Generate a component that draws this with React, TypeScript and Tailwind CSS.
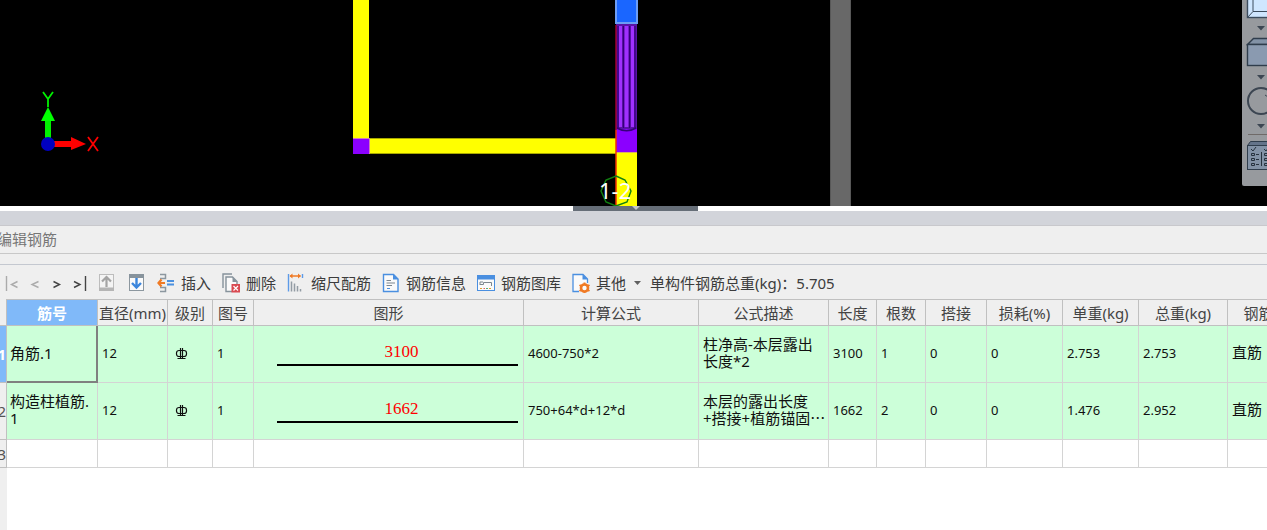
import type { ReactNode } from "react";

function Viewport() {
  return (
    <svg className="block h-[206px] w-[1267px]" viewBox="0 0 1267 206" aria-label="Model view">
      <rect x="353" y="0" width="16" height="138" fill="#ffff00" />
      <rect x="369" y="138" width="247" height="16" fill="#ffff00" />
      <path d="M369 138.5H616M369 153.5H616" stroke="#a8a800" />
      <rect x="353" y="138" width="16" height="16" fill="#8b00ff" />
      <path d="M353 138.5H369.5V154" stroke="#d080b0" fill="none" />

      <rect x="830" y="0" width="21" height="206" fill="#686868" />
      <path d="M830.5 0V206M850.5 0V206" stroke="#585858" />

      <rect x="616" y="24" width="21" height="107" fill="#5a12a8" />
      <rect x="616" y="129" width="21" height="23" fill="#8b00ff" />
      <path d="M617 127Q626.500 133 636 127V129Q626.500 134 617 129Z" fill="#35007a" />
      <path d="M620.500 26V127M632.500 26V127" stroke="#a030ff" strokeWidth="3" />
      <path d="M626.500 26V127" stroke="#a030ff" strokeWidth="4" />
      <path d="M618 26V128M623.500 26V128M629.500 26V128M635 26V128" stroke="#35007a" strokeWidth="1.200" />
      <rect x="616" y="152" width="21" height="54" fill="#ffff00" />
      <path d="M616 152.500H637" stroke="#d8b060" />
      <path d="M616 25V130" stroke="#a00030" strokeWidth="1.500" />
      <path d="M616 130V206" stroke="#f03000" strokeWidth="1.500" />
      <rect x="615" y="-2" width="23" height="26" fill="#6c9df5" />
      <rect x="617" y="-2" width="19" height="24" fill="#1a66ff" />

      <polygon
        points="616,176 625,180 631,191 627,202 616,206 606,202 601,191 606,180"
        fill="none"
        stroke="#108010"
        strokeWidth="1.400"
      />
      <text x="599" y="199" fontSize="22" fill="#ffffff" fontFamily="'Noto Sans', sans-serif">
        1-2
      </text>

      <rect x="45" y="120" width="6" height="20" fill="#00f000" />
      <path d="M48 107L55 121H41Z" fill="#00ff00" />
      <rect x="54" y="141" width="18" height="6" fill="#ff0000" />
      <path d="M71 137L86 144L71 150Z" fill="#ff0000" />
      <circle cx="48" cy="144" r="7" fill="#0000c0" />
      <path d="M43 92L48 99L53 92M48 99V107" stroke="#00f000" strokeWidth="1.800" fill="none" />
      <path d="M88 137L98 151M98 137L88 151" stroke="#ff0000" strokeWidth="1.800" fill="none" />
    </svg>
  );
}

function Caret() {
  return (
    <svg className="ml-3.5 h-1.5 w-2.5 shrink-0" viewBox="0 0 10 6" aria-hidden="true">
      <path d="M1 1H9L5 5.500Z" fill="#3c4652" />
    </svg>
  );
}

function SideTools() {
  return (
    <aside className="absolute top-0 right-0 flex h-[186px] w-[25px] flex-col overflow-hidden rounded-bl-xs bg-[#979a9e]">
      <button type="button" aria-label="View" className="flex h-[37px] flex-col">
        <svg className="h-[25px] w-[25px]" viewBox="0 0 25 25">
          <rect x="5.500" y="-8" width="30" height="25.500" fill="#cfe6ff" stroke="#3c4c5e" strokeWidth="1.400" />
          <path d="M11 -2V11.500H26M5.500 17.500L11 11.500" stroke="#3c4c5e" fill="none" />
        </svg>
        <Caret />
      </button>
      <button type="button" aria-label="Solid" className="flex h-[49px] flex-col gap-1">
        <svg className="h-[33px] w-[25px]" viewBox="0 0 25 33">
          <path d="M5.500 7.500L11.500 1.500H30V7.500Z" fill="#8292a6" stroke="#2f3d4c" strokeWidth="1.400" />
          <rect x="5.500" y="7.500" width="25" height="21" fill="#8a9ab0" stroke="#2f3d4c" strokeWidth="1.400" />
        </svg>
        <Caret />
      </button>
      <button type="button" aria-label="Rotate" className="flex h-12 flex-col gap-1">
        <svg className="h-[33px] w-[25px]" viewBox="0 0 25 33">
          <circle cx="19" cy="15" r="13" stroke="#3c4652" strokeWidth="2" fill="none" />
          <path d="M23 9L26 11" stroke="#3c4652" />
        </svg>
        <Caret />
      </button>
      <hr className="ml-1.5 border-0 border-t border-[#6f6a68]" />
      <button type="button" aria-label="Display options" className="pt-1.5">
        <svg className="h-[30px] w-[25px]" viewBox="0 0 25 30">
          <path d="M5.500 4.500L8.500 .5H28V4.500Z" fill="#64748a" stroke="#2f3d4c" />
          <rect x="5.500" y="4.500" width="25" height="24" fill="#8292a6" stroke="#2f3d4c" />
          <path d="M9 8L11 10L14 6M22 8L24 10L27 6M19.500 11V25" stroke="#26323e" fill="none" />
          <path d="M9.500 12.500h3v2h-3zM9.500 17.500h3v2h-3zM9.500 22.500h3v2h-3zM22.500 12.500h3v2h-3zM22.500 17.500h3v2h-3zM22.500 22.500h3v2h-3zM14 13.500H17M14 18.500H17M14 23.500H17" stroke="#26323e" fill="none" />
        </svg>
      </button>
    </aside>
  );
}

function Icon({ children }: { children: ReactNode }) {
  return (
    <svg className="h-5 w-[18px] shrink-0" viewBox="0 0 18 20" fill="none" aria-hidden="true">
      {children}
    </svg>
  );
}

function ArrowBox({ up = false }: { up?: boolean }) {
  return up ? (
    <Icon>
      <rect x="1.500" y="1.500" width="14" height="16" fill="#f4f4f4" stroke="#bdbdbd" />
      <path d="M1 14.500H16V18H1Z" fill="#b5b5b5" />
      <path d="M8.500 14V5M4 8.500L8.500 4L13 8.500" stroke="#a4a4a4" strokeWidth="2.200" />
    </Icon>
  ) : (
    <Icon>
      <rect x="1.500" y="1.500" width="14" height="16" fill="#fafafa" stroke="#8c979f" />
      <path d="M1 1H16V5H1Z" fill="#87939c" />
      <path d="M8.500 5V14M4 10L8.500 14.500L13 10" stroke="#3c86dc" strokeWidth="2.400" />
    </Icon>
  );
}

const insertIcon = (
  <Icon>
    <path d="M3 1.500H8.500V5.500H3M3 14.500H8.500V18.500H3" stroke="#8c979f" strokeWidth="1.500" />
    <path d="M1 10H8M4.500 6.500L1.500 10L4.500 13.500" stroke="#f07a24" strokeWidth="2.200" />
    <path d="M10 8H17M10 11.500H17" stroke="#4a90e0" strokeWidth="2" />
  </Icon>
);
const deleteIcon = (
  <Icon>
    <path d="M1 15V1H10" stroke="#87939c" strokeWidth="1.400" />
    <path d="M10 18.500H4V4H10.500L15 8.500V11" stroke="#87939c" strokeWidth="1.400" fill="#fafafa" />
    <path d="M10.500 4V9H15.500Z" fill="#87939c" />
    <rect x="9.500" y="11" width="8.500" height="8.500" fill="#d94a52" />
    <path d="M11.500 13L16 17.500M16 13L11.500 17.500" stroke="#ffffff" strokeWidth="1.200" />
  </Icon>
);
const scaleIcon = (
  <Icon>
    <path d="M1.500 1V18.500" stroke="#5d9be8" strokeWidth="1.400" />
    <path d="M15.500 1V5" stroke="#5d9be8" strokeWidth="1.400" />
    <path d="M3 3H13.500" stroke="#f07a24" strokeWidth="1.500" />
    <path d="M11 .5L14 3L11 5.500ZM5.500 .5L2.500 3L5.500 5.500Z" fill="#f07a24" />
    <path d="M4.500 8.500V18.500M7.500 10.500V18.500M10.500 13V18.500M13.500 16V18.500" stroke="#939ca4" strokeWidth="1.500" />
  </Icon>
);
const infoIcon = (
  <Icon>
    <path d="M1.500 1.500H11.500L16 6V18.500H1.500Z" fill="#fafafa" stroke="#4a8fe0" strokeWidth="1.400" />
    <path d="M11 1V6.500H16.500Z" fill="#4a8fe0" />
    <path d="M4.500 7.500H9M4.500 10H13M4.500 12.500H10" stroke="#7d868e" />
    <path d="M5 15.500H8" stroke="#4a8fe0" />
  </Icon>
);
const libraryIcon = (
  <Icon>
    <rect x=".5" y="2.500" width="17" height="15" fill="#fafafa" stroke="#4a8fe0" />
    <path d="M0 2H18V6.500H0Z" fill="#4a8fe0" />
    <path d="M3 12V9H6M3 11.500H6.500V9.500H14.500V13" stroke="#7d868e" />
    <path d="M3 15.500H5M12 15.500H14" stroke="#e0a030" />
    <path d="M6.500 15.500H8" stroke="#e06060" />
    <path d="M9 15.500H11" stroke="#50b080" />
  </Icon>
);
const otherIcon = (
  <Icon>
    <path d="M7 18.500H1V1.500H11L15.500 6V10" stroke="#4a8fe0" strokeWidth="1.300" fill="#fafafa" />
    <path d="M10.500 1V6.500H16Z" fill="#4a8fe0" />
    <circle cx="12.500" cy="15" r="3.500" stroke="#f07a24" strokeWidth="2.600" fill="#fafafa" />
    <path d="M12.500 9.500V12M12.500 18V20M7.500 12L10 13.500M17.500 12L15 13.500M7.500 18L10 16.500M17.500 18L15 16.500" stroke="#f07a24" strokeWidth="2" />
  </Icon>
);

const actions = [
  { label: "插入", icon: insertIcon },
  { label: "删除", icon: deleteIcon },
  { label: "缩尺配筋", icon: scaleIcon },
  { label: "钢筋信息", icon: infoIcon },
  { label: "钢筋图库", icon: libraryIcon },
  { label: "其他", icon: otherIcon },
];

function NavIcon({ d, dim = false }: { d: string; dim?: boolean }) {
  return (
    <svg className="h-4 w-3.5" viewBox="0 0 14 16" fill="none" aria-hidden="true">
      <path d={d} stroke={dim ? "#ababab" : "#444444"} strokeWidth="1.400" />
    </svg>
  );
}

function Toolbar() {
  return (
    <div className="flex h-[34px] items-center pt-0.5 pl-[5px] whitespace-nowrap">
      <div className="flex w-[93px] shrink-0 gap-2.5">
        <button type="button" aria-label="First"><NavIcon dim d="M1.500 1V16M12.500 6.500L6.500 9.500L12.500 12.500" /></button>
        <button type="button" aria-label="Previous"><NavIcon dim d="M9.500 6.500L3 9.500L9.500 12.500" /></button>
        <button type="button" aria-label="Next"><NavIcon d="M.5 6.500L6.500 9.500L.5 12.500" /></button>
        <button type="button" aria-label="Last" className="-ml-1"><NavIcon d="M1 6.500L7 9.500L1 12.500M12.500 1V16" /></button>
      </div>
      <button type="button" aria-label="Move up" className="mr-3"><ArrowBox up /></button>
      <button type="button" aria-label="Move down" className="mr-[11px]"><ArrowBox /></button>
      <div className="flex items-center gap-[11px]">
        {actions.map((a) => (
          <button type="button" key={a.label} className="flex items-center gap-1.5">
            {a.icon}
            <span>{a.label}</span>
          </button>
        ))}
      </div>
      <svg className="mx-[7px] h-1.5 w-2.5" viewBox="0 0 10 6" aria-hidden="true">
        <path d="M1 1H8L4.500 5Z" fill="#606060" />
      </svg>
      <span>单构件钢筋总重(kg)：5.705</span>
    </div>
  );
}

const columns = [
  { title: "筋号", width: "w-[91px]" },
  { title: "直径(mm)", width: "w-[70px]" },
  { title: "级别", width: "w-[45px]" },
  { title: "图号", width: "w-[41px]" },
  { title: "图形", width: "w-[270px]" },
  { title: "计算公式", width: "w-[175px]" },
  { title: "公式描述", width: "w-[130px]" },
  { title: "长度", width: "w-[48px]" },
  { title: "根数", width: "w-[49px]" },
  { title: "搭接", width: "w-[61px]" },
  { title: "损耗(%)", width: "w-[76px]" },
  { title: "单重(kg)", width: "w-[76px]" },
  { title: "总重(kg)", width: "w-[89px]" },
  { title: "钢筋归类", width: "w-[92px]" },
];

const rows = [
  {
    name: "角筋.1", diameter: "12", shape: "1", length: "3100", formula: "4600-750*2",
    note: "柱净高-本层露出\n长度*2", values: ["3100", "1", "0", "0", "2.753", "2.753"], kind: "直筋",
  },
  {
    name: "构造柱植筋.1", diameter: "12", shape: "1", length: "1662", formula: "750+64*d+12*d",
    note: "本层的露出长度\n+搭接+植筋锚固⋯", values: ["1662", "2", "0", "0", "1.476", "2.952"], kind: "直筋",
  },
];

function GradeSymbol() {
  return (
    <svg className="mt-0.5 ml-[3px] h-3.5 w-3.5" viewBox="0 0 14 14" fill="none" role="img" aria-label="HRB400">
      <rect x="1.500" y="3.500" width="10" height="6" rx="2.500" stroke="#101010" strokeWidth="1.200" />
      <path d="M5.500 1V12M7.500 1V12M2.500 11.500H10.500" stroke="#101010" strokeWidth="1.200" />
    </svg>
  );
}

function Cell({ children, wide = false }: { children?: ReactNode; wide?: boolean }) {
  return (
    <td className={`overflow-hidden border-r border-b border-[#d4d4d4] px-1 pb-[3px] ${wide ? "text-[15px] leading-[17px]" : "text-[13px] leading-4"}`}>
      {children}
    </td>
  );
}

function RebarTable() {
  return (
    <div className="overflow-hidden">
      <table className="w-full min-w-[1320px] table-fixed border-separate border-spacing-0 text-[#101010]">
        <thead>
          <tr className="h-[27px] text-[15px] leading-5 text-[#444444]">
            <th className="w-[7px] border-r border-b border-[#bfbfbf] bg-[#efefef] p-0" />
            {columns.map((c, i) => (
              <th
                key={c.title}
                scope="col"
                className={`${c.width} border-t border-r border-b border-[#c0c0c0] p-0 text-center whitespace-nowrap ${
                  i === 0 ? "bg-[#80b9f9] font-bold text-white" : "bg-[#efefef] font-normal"
                }`}
              >
                {c.title}
              </th>
            ))}
          </tr>
        </thead>
        <tbody>
          {rows.map((r, i) => (
            <tr key={r.name} className="h-[57px] bg-[#ccffd9]">
              <th
                scope="row"
                className={`overflow-hidden border-r border-b border-[#c0c0c0] p-0 text-[15px] ${
                  i === 0 ? "bg-[#80b9f9] font-bold text-white" : "bg-[#efefef] font-normal text-[#555555]"
                }`}
              >
                <span className="flex justify-end">{i + 1}</span>
              </th>
              <td
                className={`px-[3px] text-[15px] leading-[17px] break-all ${
                  i === 0 ? "border-r-2 border-b-2 border-[#808080]" : "border-r border-b border-[#d4d4d4] pb-[3px]"
                }`}
              >
                {r.name}
              </td>
              <Cell>{r.diameter}</Cell>
              <Cell><GradeSymbol /></Cell>
              <Cell>{r.shape}</Cell>
              <td className="border-r border-b border-[#d4d4d4] px-[5px] pb-1">
                <div className="ml-[18px] border-b-2 border-black pt-0.5 pr-0 pl-2 text-center font-['Liberation_Serif',serif] text-[17px] leading-6 text-[#ff0000]">
                  {r.length}
                </div>
              </td>
              <Cell>{r.formula}</Cell>
              <Cell wide><span className="whitespace-pre">{r.note}</span></Cell>
              {r.values.map((v, j) => (
                <Cell key={j}>{v}</Cell>
              ))}
              <Cell wide>{r.kind}</Cell>
            </tr>
          ))}
          <tr className="h-7 bg-white">
            <th scope="row" className="overflow-hidden border-r border-b border-[#c0c0c0] bg-[#efefef] p-0 text-[15px] font-normal text-[#555555]">
              <span className="flex justify-end">3</span>
            </th>
            {columns.map((c) => (
              <Cell key={c.title} />
            ))}
          </tr>
        </tbody>
      </table>
    </div>
  );
}

export default function App() {
  return (
    <main className="flex min-h-screen flex-col overflow-hidden bg-white font-['Noto_Sans','Noto_Sans_CJK_SC',sans-serif] text-[15px] leading-5 text-[#3c3c3c]">
      <section className="relative overflow-hidden bg-black">
        <Viewport />
        <SideTools />
      </section>
      <div className="flex h-[5px] justify-center bg-white pl-1">
        <button type="button" aria-label="Collapse panel" className="flex w-[125px] justify-center bg-[#666e78]">
          <svg className="h-1 w-2" viewBox="0 0 8 4" aria-hidden="true">
            <path d="M0 0H8L4 4Z" fill="#c4c8cc" />
          </svg>
        </button>
      </div>
      <div className="h-[15px] border-b border-[#c8c8cc] bg-[#d2d4da]" />
      <section className="bg-[#efefef]">
        <h2 className="-ml-[3px] flex h-7 items-center border-b border-[#c8c8c8] pb-0.5 text-[#777777]">编辑钢筋</h2>
        <div className="h-[11px] border-b border-[#c4c8d0]" />
        <Toolbar />
      </section>
      <div className="flex grow flex-col bg-white">
        <RebarTable />
        <div className="w-[7px] grow bg-[#efefef]" />
      </div>
    </main>
  );
}
